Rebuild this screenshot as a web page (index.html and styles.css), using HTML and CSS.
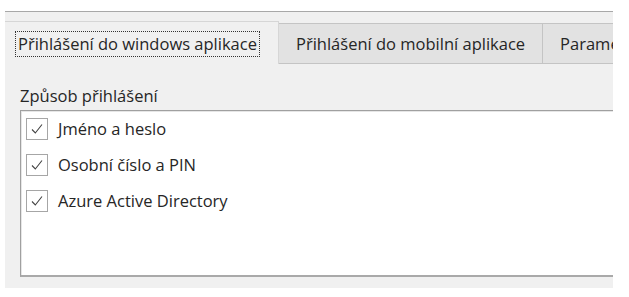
FILE: index.html
```html
<!DOCTYPE html>
<html lang="cs">
<head>
<meta charset="utf-8">
<link rel="stylesheet" href="styles.css">
</head>
<body>
<div class="panel">
  <div class="tabs">
    <div class="tab active"><span class="focus">Přihlášení do windows aplikace</span></div>
    <div class="tab">Přihlášení do mobilní aplikace</div>
    <div class="tab last">Parametry</div>
    <div class="tab-fill"></div>
  </div>
  <div class="content">
    <div class="group-label">Způsob přihlášení</div>
    <div class="listbox">
      <div class="item">
        <span class="check"><svg width="14" height="12" viewBox="0 0 14 12"><path d="M2 6.5 L5.3 10 L12 1.5" fill="none" stroke="#444" stroke-width="1.1"/></svg></span>
        <span class="label">Jméno a heslo</span>
      </div>
      <div class="item">
        <span class="check"><svg width="14" height="12" viewBox="0 0 14 12"><path d="M2 6.5 L5.3 10 L12 1.5" fill="none" stroke="#444" stroke-width="1.1"/></svg></span>
        <span class="label">Osobní číslo a PIN</span>
      </div>
      <div class="item">
        <span class="check"><svg width="14" height="12" viewBox="0 0 14 12"><path d="M2 6.5 L5.3 10 L12 1.5" fill="none" stroke="#444" stroke-width="1.1"/></svg></span>
        <span class="label">Azure Active Directory</span>
      </div>
    </div>
  </div>
</div>
</body>
</html>
```

FILE: styles.css
```css
html, body {
  margin: 0;
  padding: 0;
  background: #ffffff;
}

body {
  font-family: "Open Sans", "Noto Sans", "DejaVu Sans", sans-serif;
  font-size: 16.5px;
  color: #262626;
}

.panel {
  margin: 11px 0 0 5px;
  width: 608px;
  height: 276px;
  background: #f0f0f0;
  border-top: 1px solid #a8a8a8;
  overflow: hidden;
  display: flex;
  flex-direction: column;
}

.tabs {
  display: flex;
  align-items: flex-end;
  padding-top: 9px;
  height: 43px;
  flex: none;
  white-space: nowrap;
}

.tab {
  box-sizing: border-box;
  height: 41px;
  display: flex;
  align-items: center;
  padding: 0 17px 0 17px;
  background: #e2e2e2;
  border: 1px solid #c4c4c4;
  border-left: none;
  flex: none;
}

.tab.last {
  padding-right: 20px;
  border-right: none;
}

.tab.active {
  height: 43px;
  width: 274px;
  padding: 1px 0 0 11px;
  background: #f0f0f0;
  border: 1px solid #d6d6d6;
  border-left: none;
  border-bottom: none;
}

.tab-fill {
  flex: 1;
  border-bottom: 1px solid #c4c4c4;
}

.focus {
  outline: 1px dotted #333;
  padding: 0 2px 1px 2px;
}

.content {
  flex: 1;
  display: flex;
  flex-direction: column;
  padding: 22px 0 11px 15px;
}

.group-label {
  line-height: 20px;
  margin-bottom: 4px;
  padding-left: 0;
}

.listbox {
  flex: 1;
  width: 640px;
  background: #ffffff;
  border-top: 1px solid #a0a0a0;
  border-left: 1px solid #a0a0a0;
  border-bottom: 2px solid #a9a9a9;
  box-shadow: inset 1px 1px 0 #e6e6e6;
  padding: 7px 0 0 5px;
  display: flex;
  flex-direction: column;
  gap: 14px;
}

.item {
  display: flex;
  align-items: center;
  gap: 10px;
  height: 22px;
}

.check {
  box-sizing: border-box;
  width: 22px;
  height: 22px;
  border: 1px solid #a6a6a6;
  background: #fff;
  display: flex;
  align-items: center;
  justify-content: center;
}

.label {
  line-height: 20px;
}
```
